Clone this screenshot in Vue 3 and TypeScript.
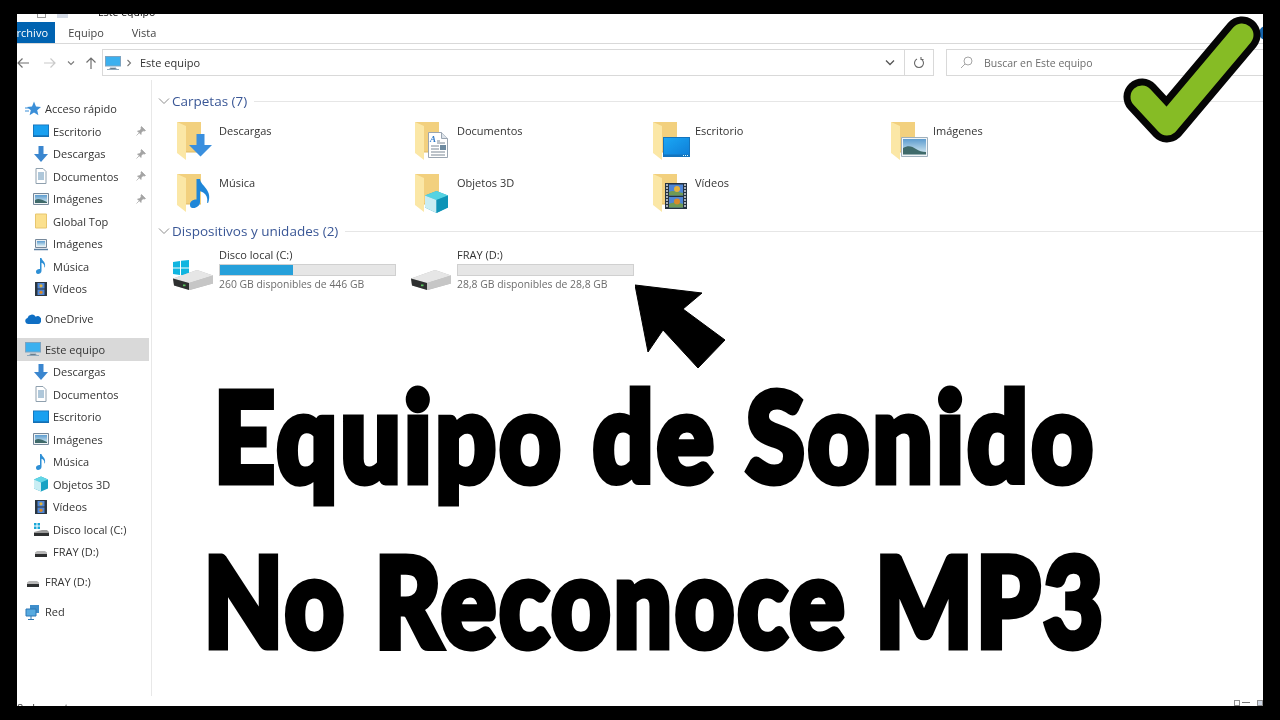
<script setup lang="ts">
interface NavItem {
  label: string
  icon: string
  child?: boolean
  pin?: boolean
  active?: boolean
  gap?: boolean
}

const nav: NavItem[] = [
  { label: 'Acceso rápido', icon: 'star' },
  { label: 'Escritorio', icon: 'desk', child: true, pin: true },
  { label: 'Descargas', icon: 'down', child: true, pin: true },
  { label: 'Documentos', icon: 'doc', child: true, pin: true },
  { label: 'Imágenes', icon: 'pic', child: true, pin: true },
  { label: 'Global Top', icon: 'folder', child: true },
  { label: 'Imágenes', icon: 'pc2', child: true },
  { label: 'Música', icon: 'note', child: true },
  { label: 'Vídeos', icon: 'film', child: true },
  { label: 'OneDrive', icon: 'cloud', gap: true },
  { label: 'Este equipo', icon: 'pc', active: true, gap: true },
  { label: 'Descargas', icon: 'down', child: true },
  { label: 'Documentos', icon: 'doc', child: true },
  { label: 'Escritorio', icon: 'desk', child: true },
  { label: 'Imágenes', icon: 'pic', child: true },
  { label: 'Música', icon: 'note', child: true },
  { label: 'Objetos 3D', icon: 'cube', child: true },
  { label: 'Vídeos', icon: 'film', child: true },
  { label: 'Disco local (C:)', icon: 'win', child: true },
  { label: 'FRAY (D:)', icon: 'usb', child: true },
  { label: 'FRAY (D:)', icon: 'usb', gap: true },
  { label: 'Red', icon: 'net', gap: true },
]

const folders = [
  { name: 'Descargas', icon: 'down' },
  { name: 'Documentos', icon: 'doc' },
  { name: 'Escritorio', icon: 'desk' },
  { name: 'Imágenes', icon: 'pic' },
  { name: 'Música', icon: 'note' },
  { name: 'Objetos 3D', icon: 'cube' },
  { name: 'Vídeos', icon: 'film' },
]

const drives = [
  { name: 'Disco local (C:)', info: '260 GB disponibles de 446 GB', used: 41.5, win: true },
  { name: 'FRAY (D:)', info: '28,8 GB disponibles de 28,8 GB', used: 0, win: false },
]
</script>

<template>
  <div class="page">
    <svg class="defs" width="0" height="0">
      <defs>
        <linearGradient id="deskfill" x1="0" y1="0" x2="1" y2="1">
          <stop offset="0" stop-color="#1aa7f5" />
          <stop offset="1" stop-color="#0f7fd8" />
        </linearGradient>
        <linearGradient id="sky" x1="0" y1="0" x2="0" y2="1">
          <stop offset="0" stop-color="#5d9ccf" />
          <stop offset="1" stop-color="#d9ecf2" />
        </linearGradient>
        <symbol id="ov-down" viewBox="0 0 24 24">
          <path d="M7.500 1h8v11h7.500l-11.500 11.500L0 12h7.500z" fill="#3a8fde" />
        </symbol>
        <symbol id="ov-doc" viewBox="0 0 20 26">
          <path d="M.5.500h13l6 6v19H.5z" fill="#fff" stroke="#9aa5b1" />
          <path d="M13.500.500v6h6" fill="#dde3ea" stroke="#9aa5b1" />
          <text x="2" y="10" font-size="9" font-weight="700" font-style="italic" fill="#2f78c8" font-family="Liberation Serif, serif">A</text>
          <path d="M9 9h3M9 11h8M3 14h8M3 17h8M3 20h14M3 23h14" stroke="#7a8794" stroke-width="1" />
          <path d="M12 13h6v5h-6z" fill="#6e8aa0" />
        </symbol>
        <symbol id="ov-desk" viewBox="0 0 27 20">
          <path d="M0 0h27v20H0z" fill="#1474bd" />
          <path d="M1 1h25v16.500H1z" fill="url(#deskfill)" />
          <path d="M20 18.500h5" stroke="#dff" stroke-dasharray="1 1" />
        </symbol>
        <symbol id="ov-pic" viewBox="0 0 27 20">
          <path d="M.5.500h26v19H.5z" fill="#f2f5f7" stroke="#9fb0bc" />
          <path d="M2 2h23v15.500H2z" fill="url(#sky)" />
          <path d="M2 11c5-3 9-2 13 1 3 2 6 3 10 3v2.500H2z" fill="#3f6a6a" />
        </symbol>
        <symbol id="ov-note" viewBox="0 0 20 29">
          <path d="M6.500 0h3.500c.6 4 3.500 6 6 9.500 3.500 4.500 4 9 2.300 14-.4 1-1.300.7-1.100-.3.6-4.500-.8-7.500-4-9.700-1-.7-2.200-1.200-3.200-1.300V23c0 3.500-3.500 6-6.500 6S0 27.700 0 25.300C0 22.500 3 20.300 6.500 20.500z" fill="#1f86d8" />
        </symbol>
        <symbol id="ov-cube" viewBox="0 0 23 22">
          <path d="M11.500 0 23 4.500v12L11.500 22 0 16.500v-12z" fill="#2aa9c9" />
          <path d="M0 4.500 11.500 0 23 4.500 11.500 9z" fill="#55d3e2" />
          <path d="M0 4.500 11.500 9v13L0 16.500z" fill="#c9edf3" />
          <path d="M11.500 9 23 4.500v12L11.500 22z" fill="#0e94b7" />
        </symbol>
        <symbol id="ov-film" viewBox="0 0 22 26">
          <path d="M0 0h22v26H0z" fill="#25323f" />
          <path d="M4 1.500h14v11H4zM4 14h14v10.500H4z" fill="#4f86d6" />
          <path d="M4 9c3-2 6-1 14 1v2.500H4zM4 21c4-2 8-2 14 0v3.500H4z" fill="#6f9a55" />
          <circle cx="12" cy="6" r="3" fill="#e6b23a" />
          <circle cx="12" cy="18.500" r="3" fill="#d88a2a" />
          <path d="M1 2h2M1 5h2M1 8h2M1 11h2M1 14h2M1 17h2M1 20h2M1 23h2M19 2h2M19 5h2M19 8h2M19 11h2M19 14h2M19 17h2M19 20h2M19 23h2" stroke="#d7dde2" stroke-width="1.400" />
        </symbol>
        <symbol id="drive" viewBox="0 0 40 20">
          <path d="M0 8.500 24 0l16 5.500v8L17 20 1 15.500z" fill="#bcbcbc" />
          <path d="M0 8.500 24 0l16 5.500L16 13z" fill="#e6e6e6" />
          <path d="M0 8.500 16 13v7L1 15.500z" fill="#2e3030" />
          <path d="M16 13 40 5.500v8L16 20z" fill="#c6c6c6" />
          <path d="M10 14.500h2.500v1.700H10z" fill="#57c35a" />
        </symbol>
      </defs>
    </svg>

    <div class="window">
      <div class="titlebar">
        <span class="qa qa-box"></span>
        <span class="qa qa-square"></span>
        <span class="titletext">Este equipo</span>
      </div>

      <div class="ribbon">
        <span class="tab tab-file">Archivo</span>
        <span class="tab">Equipo</span>
        <span class="tab">Vista</span>
      </div>

      <div class="addressrow">
        <div class="navbtns">
          <svg width="14" height="14" viewBox="0 0 14 14" fill="none" stroke="#6f6f6f" stroke-width="1.200">
            <path d="M13 7H2M6.500 2.500 2 7l4.500 4.500" />
          </svg>
          <svg width="14" height="14" viewBox="0 0 14 14" fill="none" stroke="#c9c9c9" stroke-width="1.200">
            <path d="M1 7h11M7.500 2.500 12 7l-4.500 4.500" />
          </svg>
          <svg class="tight-a" width="8" height="8" viewBox="0 0 8 8" fill="none" stroke="#7a7a7a" stroke-width="1.100">
            <path d="m1 2.500 3 3 3-3" />
          </svg>
          <svg class="tight-b" width="14" height="14" viewBox="0 0 14 14" fill="none" stroke="#6f6f6f" stroke-width="1.200">
            <path d="M7 13V2M2.500 6.500 7 2l4.500 4.500" />
          </svg>
        </div>
        <div class="address">
          <svg class="navicon" width="16" height="16"><use href="#i-pc" /></svg>
          <svg width="6" height="8" viewBox="0 0 6 8" fill="none" stroke="#777" stroke-width="1.100">
            <path d="m1.500 1 3 3-3 3" />
          </svg>
          <span class="crumb">Este equipo</span>
          <span class="spacer"></span>
          <svg width="10" height="8" viewBox="0 0 10 8" fill="none" stroke="#555" stroke-width="1.300">
            <path d="m1 1.500 4 4 4-4" />
          </svg>
        </div>
        <div class="refresh">
          <svg width="12" height="13" viewBox="0 0 12 13" fill="none" stroke="#666" stroke-width="1.100">
            <path d="M4 3a4.500 4.500 0 1 0 4 0M8 1v2.500h2.500" />
          </svg>
        </div>
        <div class="search">
          <svg width="13" height="13" viewBox="0 0 13 13" fill="none" stroke="#a5a5a5" stroke-width="1">
            <circle cx="8" cy="5" r="4" />
            <path d="M5 8 1 12" />
          </svg>
          <span>Buscar en Este equipo</span>
        </div>
      </div>

      <div class="body">
        <nav class="sidebar">
          <div
            v-for="(item, i) in nav"
            :key="i"
            class="navitem"
            :class="{ child: item.child, active: item.active, gap: item.gap }"
          >
            <svg class="navicon" width="16" height="16"><use :href="'#i-' + item.icon" /></svg>
            <span class="navlabel">{{ item.label }}</span>
            <svg v-if="item.pin" class="pin" width="10" height="10" viewBox="0 0 10 10">
              <path d="M5.500.500 9.500 4.500 8.500 5 7 4.800 5.200 6.600 5 8.500 1.500 5l1.900-.2L5.200 3 5 1.500zM3 7 .5 9.500" fill="#a3a3a3" stroke="#a3a3a3" stroke-width=".7" />
            </svg>
          </div>
        </nav>

        <main class="content">
          <div class="group">
            <svg class="chev" width="12" height="8" viewBox="0 0 12 8" fill="none" stroke="#8d8d8d">
              <path d="m1 1.500 5 5 5-5" />
            </svg>
            <span class="grouptitle">Carpetas (7)</span>
            <span class="groupline"></span>
          </div>
          <div class="folders">
            <div v-for="f in folders" :key="f.name" class="folder">
              <div class="bigicon">
                <svg class="bigfolder" width="24" height="38" viewBox="0 0 24 38">
                  <path d="M0 0h24v30H9z" fill="#f2d07e" />
                  <path d="M0 0 9 4v34L0 31z" fill="#fbe7a6" />
                  <path d="M9 30h15" stroke="#e2bb62" />
                </svg>
                <svg class="overlay" :class="'ov-' + f.icon"><use :href="'#ov-' + f.icon" /></svg>
              </div>
              <span class="foldername">{{ f.name }}</span>
            </div>
          </div>

          <div class="group group-drives">
            <svg class="chev" width="12" height="8" viewBox="0 0 12 8" fill="none" stroke="#8d8d8d">
              <path d="m1 1.500 5 5 5-5" />
            </svg>
            <span class="grouptitle">Dispositivos y unidades (2)</span>
            <span class="groupline"></span>
          </div>
          <div class="drives">
            <div v-for="d in drives" :key="d.name" class="drive">
              <div class="driveicon">
                <svg class="drivewin" v-if="d.win" width="16" height="16" viewBox="0 0 16 16">
                  <path d="M0 2 7 1v6.500H0zM8 .800 16 0v7.500H8zM0 8.500h7V15l-7-1zM8 8.500h8V16l-8-1z" fill="#11b5e0" />
                </svg>
                <svg class="drivebody" width="40" height="20"><use href="#drive" /></svg>
              </div>
              <div class="driveinfo">
                <div class="drivename">{{ d.name }}</div>
                <div class="bar"><div class="barfill" :style="{ width: d.used + '%' }"></div></div>
                <div class="drivefree">{{ d.info }}</div>
              </div>
            </div>
          </div>
        </main>
      </div>

      <div class="statusbar">
        <span>8 elementos</span>
        <span class="spacer"></span>
        <span class="viewbtn"></span>
        <span class="viewdash"></span>
        <span class="viewbtn viewbtn-on"></span>
      </div>

      <span class="helpdot"></span>
      <svg class="check" width="140" height="140" viewBox="0 0 140 140" fill="none" stroke-linecap="round" stroke-linejoin="round">
        <path d="M21 83 46 110 121 21" stroke="#050505" stroke-width="37" />
        <path d="M21 83 46 110 121 21" stroke="#86bc25" stroke-width="23" />
      </svg>
      <svg class="arrow" width="92" height="86" viewBox="0 0 92 86">
        <path d="M0 1 67 9 48 25 90 56 63 84 28 46 13 68z" fill="#000" stroke="#000" stroke-linejoin="round" />
      </svg>
      <div class="headline">
        <div class="line1">Equipo de Sonido</div>
        <div class="line2">No Reconoce MP3</div>
      </div>
    </div>

    <svg class="defs" width="0" height="0">
      <defs>
        <symbol id="i-star" viewBox="0 0 16 16">
          <path d="M9 .500 11 5.500l5 .400-3.800 3.300 1.200 5L9 11.500l-4.400 2.700 1.200-5L2 5.900l5-.400z" fill="#3b8fd8" />
          <path d="M0 7h5M0 10h4" stroke="#3b8fd8" />
        </symbol>
        <symbol id="i-desk" viewBox="0 0 16 16">
          <path d="M0 1.500h16v12.500H0z" fill="#146fb4" />
          <path d="M.800 2.300h14.400v10H.800z" fill="#19a0f0" />
        </symbol>
        <symbol id="i-down" viewBox="0 0 16 16">
          <path d="M5.500 0h5v8H15l-7 8-7-8h4.500z" fill="#3a86cf" />
        </symbol>
        <symbol id="i-doc" viewBox="0 0 16 16">
          <path d="M3 .500h7l3 3v12H3z" fill="#fff" stroke="#8fa0ae" />
          <path d="M5 5h6M5 7h6M5 9h6M5 11h6" stroke="#5f8fb4" />
        </symbol>
        <symbol id="i-pic" viewBox="0 0 16 16">
          <path d="M.500 2.500h15v11H.500z" fill="#eef2f4" stroke="#76889a" />
          <path d="M2 4h12v8H2z" fill="url(#sky)" />
          <path d="M2 9c3-2 6-1 12 2v1H2z" fill="#3f6a6a" />
        </symbol>
        <symbol id="i-folder" viewBox="0 0 16 16">
          <path d="M2.500 1h11v14h-11z" fill="#fbe08e" stroke="#e7c66f" />
        </symbol>
        <symbol id="i-pc2" viewBox="0 0 16 16">
          <path d="M2.500 3.500h11v8h-11z" fill="#e8eef2" stroke="#76889a" />
          <path d="M4 5h8v5H4z" fill="url(#sky)" />
          <path d="M1 13.500h14" stroke="#5c7fa0" stroke-width="1.500" />
        </symbol>
        <symbol id="i-note" viewBox="0 0 16 16">
          <path d="M7 0h1.500c.3 2.500 4.500 4 3.500 9-.2.800-.8.500-.7-.200.300-2-1.200-3.500-2.800-4V13c0 2-2 3-3.500 3S3 15 3 13.500 5 10.700 7 11z" fill="#2d8fd5" />
        </symbol>
        <symbol id="i-film" viewBox="0 0 16 16">
          <path d="M2 1h12v14H2z" fill="#2b3640" />
          <path d="M4.500 2h7v5.500h-7zM4.500 8.500h7V14h-7z" fill="#4f86d6" />
          <circle cx="8" cy="4.800" r="1.600" fill="#e0b23d" />
          <circle cx="8" cy="11.300" r="1.600" fill="#d88a2a" />
        </symbol>
        <symbol id="i-cloud" viewBox="0 0 16 16">
          <path d="M3 13a3 3 0 0 1-.500-5.900 4.500 4.500 0 0 1 8.200-1.400A3.800 3.800 0 0 1 15.800 11c-.300 1.200-1.200 2-2.500 2z" fill="#0f6fc4" />
        </symbol>
        <symbol id="i-pc" viewBox="0 0 16 16">
          <path d="M0 1h16v10.500H0z" fill="#7da3c0" />
          <path d="M1 2h14v8.500H1z" fill="#3bb0ef" />
          <path d="M5 13h6v1H5zM2 14.500h12" stroke="#8ea7ba" />
        </symbol>
        <symbol id="i-cube" viewBox="0 0 16 16">
          <path d="M8 .500 15 3.500v9l-7 3-7-3v-9z" fill="#19a3c4" />
          <path d="M1 3.500 8 .500l7 3-7 3z" fill="#62d6e6" />
          <path d="M1 3.500 8 6.500v9l-7-3z" fill="#c9eef4" />
        </symbol>
        <symbol id="i-win" viewBox="0 0 16 16">
          <path d="M1 2h2.500v2.500H1zM4.500 2H7v2.500H4.500zM1 5.500h2.500V8H1zM4.500 5.500H7V8H4.500z" fill="#19a7d8" />
          <path d="M1 11 9 9h5l2 2v3H1z" fill="#9a9a9a" />
          <path d="M1 12h15v3H1z" fill="#2d2f30" />
        </symbol>
        <symbol id="i-usb" viewBox="0 0 16 16">
          <path d="M2 8.500 4 7h8l2 1.500V10H2z" fill="#b7b7b7" />
          <path d="M2 10h12v3H2z" fill="#2d2f30" />
        </symbol>
        <symbol id="i-net" viewBox="0 0 16 16">
          <path d="M5 1h9v8H5z" fill="#3f8ecb" />
          <path d="M1 5h10v7H1z" fill="#57aae0" stroke="#2d77b4" />
          <path d="M6 12v3M3 15.500h6" stroke="#2d77b4" />
        </symbol>
      </defs>
    </svg>
  </div>
</template>

<style scoped>
.page {
  width: 1280px;
  height: 720px;
  box-sizing: border-box;
  padding: 14px 17px;
  background: #000;
  overflow: hidden;
  font-family: "Open Sans", "Noto Sans", sans-serif;
  font-size: 11px;
  color: #333;
}
.defs {
  position: absolute;
}
.window {
  position: relative;
  display: flex;
  flex-direction: column;
  height: 692px;
  overflow: hidden;
  background: #fff;
  filter: blur(0.35px);
}
.titlebar {
  display: flex;
  align-items: flex-start;
  height: 4px;
  overflow: hidden;
  flex: none;
}
.qa {
  display: block;
  height: 4px;
  flex: none;
}
.qa-box {
  width: 9px;
  margin-left: 20px;
  border: 1px solid #9a9a9a;
  border-top: none;
  box-sizing: border-box;
}
.qa-square {
  width: 11px;
  margin-left: 11px;
  background: #d5dbe6;
}
.titletext {
  margin-left: 30px;
  margin-top: -2px;
  line-height: 1px;
  color: #111;
  font-size: 10.500px;
  white-space: nowrap;
}
.ribbon {
  display: flex;
  align-items: flex-end;
  height: 25px;
  border-bottom: 1px solid #d9d9d9;
  flex: none;
}
.tab {
  width: 58px;
  text-align: center;
  line-height: 21px;
  color: #444;
}
.tab-file {
  width: 38px;
  box-sizing: border-box;
  background: #0063b1;
  color: #fff;
  text-align: right;
  padding-right: 7px;
  margin-right: 2px;
  overflow: hidden;
  white-space: nowrap;
  direction: rtl;
}
.addressrow {
  display: flex;
  align-items: center;
  height: 27px;
  margin-top: 5px;
  flex: none;
}
.navbtns {
  display: flex;
  align-items: center;
  gap: 13px;
  width: 85px;
  margin-left: -1px;
  flex: none;
}
.tight-a {
  margin-left: -3px;
}
.tight-b {
  margin-left: -4px;
}
.address {
  display: flex;
  align-items: center;
  gap: 5px;
  box-sizing: border-box;
  height: 27px;
  width: 803px;
  margin-left: 1px;
  padding: 0 9px 0 2px;
  border: 1px solid #d9d9d9;
  flex: none;
}
.crumb {
  margin-left: 3px;
  color: #333;
}
.spacer {
  flex: 1;
}
.refresh {
  display: flex;
  align-items: center;
  justify-content: center;
  box-sizing: border-box;
  width: 29px;
  height: 27px;
  border: 1px solid #d9d9d9;
  border-left: none;
}
.search {
  display: flex;
  align-items: center;
  gap: 11px;
  box-sizing: border-box;
  height: 27px;
  flex: 1;
  margin-left: 12px;
  padding-left: 13px;
  border: 1px solid #d9d9d9;
  border-right: none;
  color: #6d6d6d;
  font-size: 10.500px;
}
.body {
  display: flex;
  flex: 1;
  min-height: 0;
  margin-top: 4px;
}
.sidebar {
  width: 135px;
  box-sizing: border-box;
  padding-top: 17.500px;
  border-right: 1px solid #e8e8e8;
  flex: none;
}
.navitem {
  display: flex;
  align-items: center;
  width: 132px;
  height: 22.500px;
  padding-left: 8px;
  box-sizing: border-box;
  white-space: nowrap;
}
.navitem.child {
  padding-left: 16px;
}
.navitem.gap {
  margin-top: 7.500px;
}
.navitem.active {
  background: #d9d9d9;
  height: 23px;
}
.navitem.active + .navitem {
  margin-top: 0;
}
.navicon {
  flex: none;
}
.navlabel {
  margin-left: 4px;
}
.pin {
  margin-left: auto;
  margin-right: 3px;
}
.content {
  flex: 1;
  min-width: 0;
  padding: 11px 0 0 6px;
}
.group {
  display: flex;
  align-items: center;
  height: 20px;
}
.group-drives {
  margin-top: 4px;
}
.chev {
  flex: none;
}
.grouptitle {
  margin-left: 2px;
  font-size: 13.500px;
  color: #3a5796;
  white-space: nowrap;
}
.groupline {
  flex: 1;
  height: 1px;
  margin-left: 7px;
  background: #e6e6e6;
}
.folders {
  display: grid;
  grid-template-columns: repeat(4, 238px);
  grid-template-rows: 52px 45px;
  margin-top: 9px;
  margin-left: 16px;
}
.folder {
  display: flex;
  align-items: flex-start;
}
.bigicon {
  position: relative;
  width: 45px;
  height: 44px;
  flex: none;
}
.bigfolder {
  position: absolute;
  left: 3px;
  top: 2px;
}
.overlay {
  position: absolute;
}
.ov-down {
  left: 15px;
  top: 13px;
  width: 24px;
  height: 24px;
}
.ov-doc {
  left: 16px;
  top: 12px;
  width: 20px;
  height: 26px;
}
.ov-desk,
.ov-pic {
  left: 13px;
  top: 17px;
  width: 27px;
  height: 20px;
}
.ov-note {
  left: 16px;
  top: 7px;
  width: 20px;
  height: 29px;
}
.ov-cube {
  left: 13px;
  top: 19px;
  width: 23px;
  height: 22px;
}
.ov-film {
  left: 15px;
  top: 11px;
  width: 22px;
  height: 26px;
}
.foldername {
  padding-top: 3px;
  line-height: 15px;
}
.drives {
  display: flex;
  margin-top: 6px;
  margin-left: 15px;
}
.drive {
  display: flex;
  width: 238px;
}
.driveicon {
  position: relative;
  width: 46px;
  height: 50px;
  flex: none;
}
.drivebody {
  position: absolute;
  left: 0;
  top: 23px;
}
.drivewin {
  position: absolute;
  left: 0;
  top: 13px;
}
.driveinfo {
  width: 177px;
  line-height: 15px;
}
.bar {
  height: 10px;
  margin: 2px 0 1px;
  border: 1px solid #d0d0d0;
  background: #e6e6e6;
}
.barfill {
  height: 100%;
  background: #26a0da;
}
.drivefree {
  color: #6d6d6d;
  font-size: 10.400px;
}
.statusbar {
  display: flex;
  height: 10px;
  overflow: hidden;
  flex: none;
  padding-top: 4px;
  box-sizing: border-box;
  line-height: 15px;
  color: #444;
}
.viewbtn {
  width: 6px;
  height: 6px;
  border: 1px solid #8f8f8f;
  box-sizing: border-box;
}
.viewbtn-on {
  background: #cfd8e6;
}
.viewdash {
  width: 8px;
  height: 1px;
  margin: 2px 7px 0 2px;
  background: #777;
}
.helpdot {
  position: absolute;
  left: 1242px;
  top: 12px;
  width: 14px;
  height: 14px;
  border-radius: 50%;
  background: #1464ac;
}
.check {
  position: absolute;
  left: 1104px;
  top: 0;
}
.arrow {
  position: absolute;
  left: 618px;
  top: 270px;
}
.headline {
  position: absolute;
  left: 0;
  right: 0;
  top: 338px;
  color: #000;
  font-family: Lato, "Open Sans", sans-serif;
  font-weight: 900;
  font-size: 124px;
  line-height: 165px;
  letter-spacing: 4px;
  text-align: center;
  white-space: nowrap;
  -webkit-text-stroke: 7px #000;
}
.line1 {
  transform: translateX(15px) scaleX(0.857);
}
.line2 {
  transform: translateX(15px) scaleX(0.826);
}
</style>

<style>
html,
body {
  background: #000;
}
</style>
